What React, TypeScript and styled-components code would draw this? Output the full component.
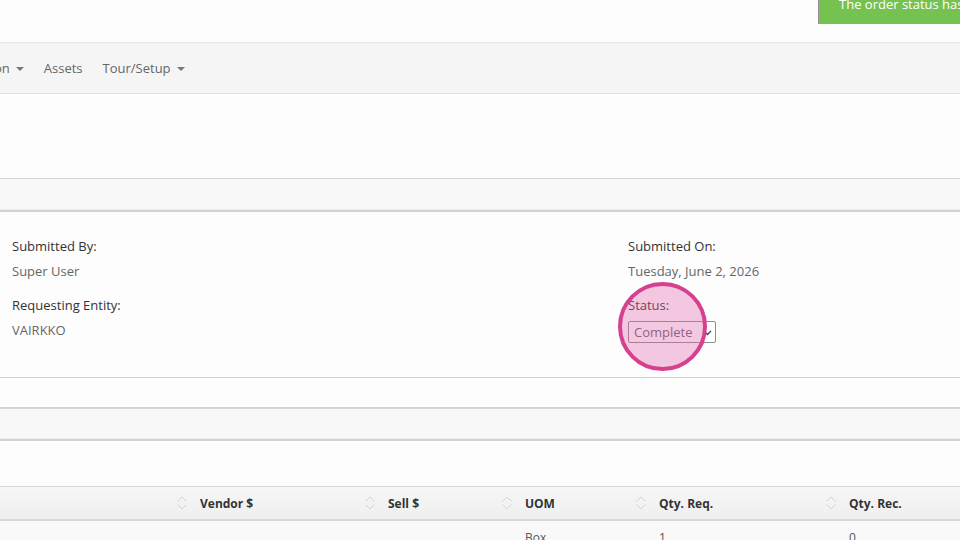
import styled, { createGlobalStyle } from 'styled-components';

const GlobalStyle = createGlobalStyle`
  html, body {
    margin: 0;
    padding: 0;
    background: #fdfdfd;
    font-family: "Open Sans", "Liberation Sans", sans-serif;
    color: #333;
    overflow: hidden;
  }
  * { box-sizing: border-box; }
`;

const Page = styled.div`
  position: relative;
  width: 960px;
  height: 540px;
  overflow: hidden;
  background: #fdfdfd;
`;

const TopBar = styled.div`
  height: 43px;
  border-bottom: 1px solid #e6e6e6;
  background: #fdfdfd;
`;

const Toast = styled.div`
  position: absolute;
  top: 0;
  left: 818px;
  width: 160px;
  height: 24px;
  background: #76c251;
  border-left: 1px solid #9a8f9a;
  color: #fff;
  font-size: 13px;
  line-height: 13px;
  padding-left: 20px;
  white-space: nowrap;
  overflow: hidden;

  span {
    display: block;
    margin-top: -2px;
  }
`;

const NavBar = styled.nav`
  height: 51px;
  display: flex;
  align-items: center;
  gap: 20px;
  background: #f5f5f5;
  border-bottom: 1px solid #e2e2e2;
  margin-left: -6px;
`;

const NavItem = styled.div`
  display: flex;
  align-items: center;
  gap: 6px;
  font-size: 13px;
  color: #666;
`;

const Caret = styled.span`
  width: 0;
  height: 0;
  border-left: 4px solid transparent;
  border-right: 4px solid transparent;
  border-top: 4px solid #777;
  margin-top: 1px;
`;

const Spacer = styled.div<{ $h: number; $bg?: string; $line?: string }>`
  height: ${(p) => p.$h}px;
  background: ${(p) => p.$bg ?? '#fdfdfd'};
  border-bottom: ${(p) => (p.$line ? `1px solid ${p.$line}` : 'none')};
`;

const GrayStrip = styled.div<{ $h: number }>`
  height: ${(p) => p.$h}px;
  background: #f8f8f8;
  border-top: 1px solid #d6d6d6;
  border-bottom: 2px solid #d2d2d2;
  box-shadow: inset 0 -1px 0 #ececec;
`;

const Details = styled.section`
  position: relative;
  height: 165px;
  padding: 25px 12px 0;
  display: grid;
  grid-template-columns: 616px 1fr;
  background: #fdfdfd;
`;

const Column = styled.div`
  display: flex;
  flex-direction: column;
`;

const Label = styled.div`
  font-size: 13px;
  line-height: 18px;
  color: #333;
  margin-bottom: 7px;
`;

const Value = styled.div`
  font-size: 13px;
  line-height: 18px;
  color: #666;
  margin-bottom: 16px;
`;

const Select = styled.div`
  width: 88px;
  height: 22px;
  border: 1px solid #8e8e8e;
  border-radius: 2px;
  display: flex;
  align-items: center;
  justify-content: space-between;
  padding: 0 3px 0 5px;
  font-size: 13px;
  color: #666;
  background: #fff;
`;

const Highlight = styled.div`
  position: absolute;
  left: 618px;
  top: 70px;
  width: 89px;
  height: 89px;
  border-radius: 50%;
  border: 4px solid #d6408f;
  background: rgba(224, 98, 168, 0.35);
`;

const LineTop = styled.div`
  border-top: 1px solid #d2d2d2;
`;

const TableHead = styled.div`
  height: 35px;
  display: grid;
  grid-template-columns: 175px 188px 137px 134px 190px 1fr;
  align-items: center;
  background: linear-gradient(#f6f6f6, #efefef);
  border-top: 1px solid #d6d6d6;
  border-bottom: 2px solid #d8d8d8;
`;

const HeadCell = styled.div`
  display: flex;
  align-items: center;
  gap: 12px;
  padding-left: 1px;
  font-size: 12px;
  font-weight: 700;
  color: #333;
`;

const Row = styled.div`
  display: grid;
  grid-template-columns: 175px 188px 137px 134px 190px 1fr;
  height: 40px;
  background: #f9f9f9;
  padding-top: 8px;
`;

const Cell = styled.div`
  padding-left: 25px;
  font-size: 12px;
  color: #555;
`;

function SortIcon() {
  return (
    <svg width="12" height="16" viewBox="0 0 12 16" fill="none">
      <path d="M1.5 6.5 L6 2 L10.5 6.5" stroke="#d4d4d4" strokeWidth="1" />
      <path d="M1.5 9.5 L6 14 L10.5 9.5" stroke="#d4d4d4" strokeWidth="1" />
    </svg>
  );
}

function ChevronDown() {
  return (
    <svg width="9" height="9" viewBox="0 0 9 9" fill="none">
      <path d="M1 3 L4.5 6.5 L8 3" stroke="#444" strokeWidth="1.4" />
    </svg>
  );
}

const headers = ['', 'Vendor $', 'Sell $', 'UOM', 'Qty. Req.', 'Qty. Rec.'];

export default function App() {
  return (
    <Page>
      <GlobalStyle />
      <TopBar />
      <Toast>
        <span>The order status has been updated</span>
      </Toast>
      <NavBar>
        <NavItem>
          on <Caret />
        </NavItem>
        <NavItem>Assets</NavItem>
        <NavItem>
          Tour/Setup <Caret />
        </NavItem>
      </NavBar>
      <Spacer $h={84} />
      <GrayStrip $h={34} />
      <Details>
        <Column>
          <Label>Submitted By:</Label>
          <Value>Super User</Value>
          <Label>Requesting Entity:</Label>
          <Value>VAIRKKO</Value>
        </Column>
        <Column>
          <Label>Submitted On:</Label>
          <Value>Tuesday, June 2, 2026</Value>
          <Label>Status:</Label>
          <Select>
            Complete
            <ChevronDown />
          </Select>
        </Column>
        <Highlight />
      </Details>
      <LineTop />
      <Spacer $h={30} $line="#d2d2d2" />
      <GrayStrip $h={33} />
      <Spacer $h={45} />
      <TableHead>
        {headers.map((h, i) =>
          i === 0 ? (
            <div key={i} />
          ) : (
            <HeadCell key={i}>
              <SortIcon />
              {h}
            </HeadCell>
          )
        )}
      </TableHead>
      <Row>
        <Cell />
        <Cell />
        <Cell />
        <Cell>Box</Cell>
        <Cell>1</Cell>
        <Cell>0</Cell>
      </Row>
    </Page>
  );
}
